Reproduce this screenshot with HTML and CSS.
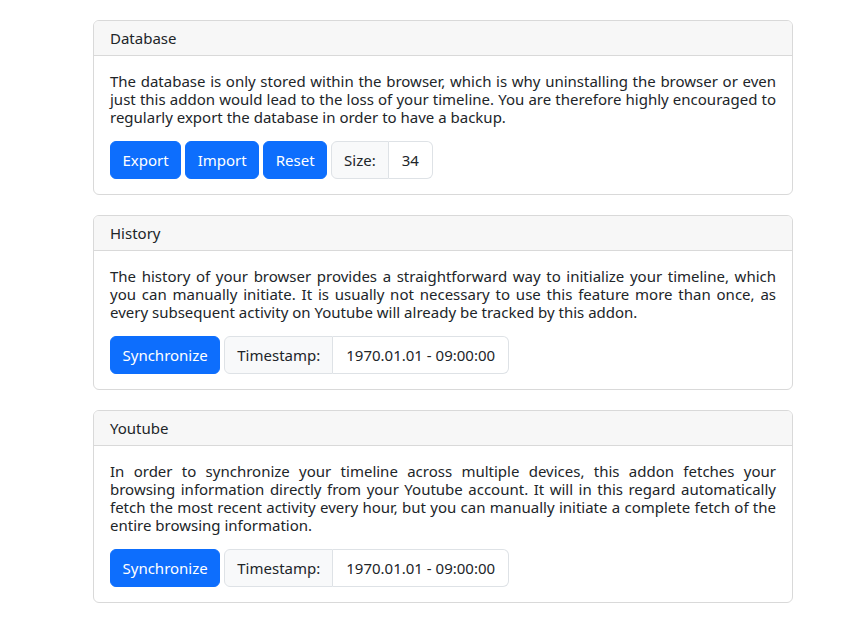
FILE: index.html
```html
<!DOCTYPE html>
<html>
<head>
<meta charset="utf-8">
<link rel="stylesheet" href="styles.css">
</head>
<body>
<main class="page">
  <section class="card">
    <div class="card-header">Database</div>
    <div class="card-body">
      <p class="card-text">The database is only stored within the browser, which is why uninstalling the browser or even just this addon would lead to the loss of your timeline. You are therefore highly encouraged to regularly export the database in order to have a backup.</p>
      <div class="actions">
        <button class="btn">Export</button>
        <button class="btn">Import</button>
        <button class="btn">Reset</button>
        <div class="group">
          <span class="group-label">Size:</span>
          <span class="group-value">34</span>
        </div>
      </div>
    </div>
  </section>
  <section class="card">
    <div class="card-header">History</div>
    <div class="card-body">
      <p class="card-text">The history of your browser provides a straightforward way to initialize your timeline, which you can manually initiate. It is usually not necessary to use this feature more than once, as every subsequent activity on Youtube will already be tracked by this addon.</p>
      <div class="actions">
        <button class="btn">Synchronize</button>
        <div class="group">
          <span class="group-label">Timestamp:</span>
          <span class="group-value">1970.01.01 - 09:00:00</span>
        </div>
      </div>
    </div>
  </section>
  <section class="card">
    <div class="card-header">Youtube</div>
    <div class="card-body">
      <p class="card-text">In order to synchronize your timeline across multiple devices, this addon fetches your browsing information directly from your Youtube account. It will in this regard automatically fetch the most recent activity every hour, but you can manually initiate a complete fetch of the entire browsing information.</p>
      <div class="actions">
        <button class="btn">Synchronize</button>
        <div class="group">
          <span class="group-label">Timestamp:</span>
          <span class="group-value">1970.01.01 - 09:00:00</span>
        </div>
      </div>
    </div>
  </section>
</main>
</body>
</html>
```
FILE: styles.css
```css
html, body {
  margin: 0;
  padding: 0;
  background: #fff;
}
body {
  font-family: "Noto Sans", "Open Sans", sans-serif;
  color: #212529;
  font-size: 15px;
}
.page {
  display: flex;
  flex-direction: column;
  gap: 20px;
  width: 700px;
  padding: 20px 0 0 93px;
}
.card {
  border: 1px solid #d9d9d9;
  border-radius: 6px;
  overflow: hidden;
}
.card-header {
  background: #f7f7f7;
  border-bottom: 1px solid #d9d9d9;
  padding: 0 16px;
  height: 34px;
  line-height: 34px;
  font-size: 15px;
}
.card-body {
  padding: 16px 16px 15px;
}
.card-text {
  margin: 0 0 15px;
  line-height: 18px;
  text-align: justify;
  font-size: 15px;
}
.actions {
  display: flex;
  gap: 4px;
}
.btn {
  font-family: inherit;
  font-size: 15px;
  color: #fff;
  background: #0d6efd;
  border: 1px solid #0d6efd;
  border-radius: 6px;
  height: 38px;
  padding: 0 11.5px;
  cursor: pointer;
}
.group {
  display: flex;
  height: 38px;
  font-size: 15px;
}
.group-label {
  display: flex;
  align-items: center;
  padding: 0 12px;
  background: #f8f9fa;
  border: 1px solid #dee2e6;
  border-radius: 6px 0 0 6px;
}
.group-value {
  display: flex;
  align-items: center;
  padding: 0 13px;
  background: #fff;
  border: 1px solid #dee2e6;
  border-left: none;
  border-radius: 0 6px 6px 0;
}
```
